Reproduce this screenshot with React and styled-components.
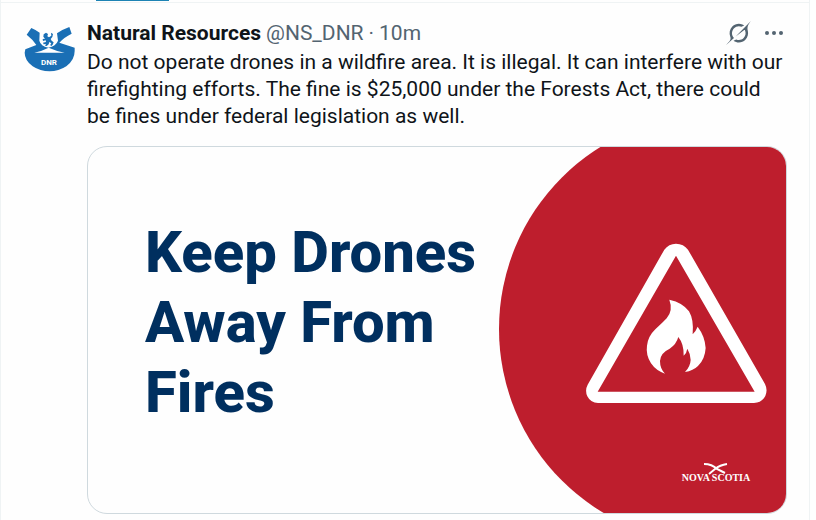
import styled, { createGlobalStyle } from "styled-components"

export default function App() {
    return (
        <>
            <GlobalStyle />
            <Coluna>
                <Abas>
                    <AbaAtiva />
                </Abas>
                <Post>
                    <LinkAvatar href="#perfil" aria-label="Natural Resources">
                        <Avatar />
                    </LinkAvatar>
                    <Conteudo>
                        <Cabecalho>
                            <Nome href="#perfil">Natural Resources</Nome>
                            <Info>@NS_DNR</Info>
                            <Info>·</Info>
                            <Info>10m</Info>
                            <Acoes>
                                <Botao type="button" aria-label="Grok">
                                    <IconeGrok />
                                </Botao>
                                <Botao type="button" aria-label="More">
                                    <IconeMais />
                                </Botao>
                            </Acoes>
                        </Cabecalho>
                        <Texto>
                            Do not operate drones in a wildfire area. It is illegal. It can interfere with our
                            firefighting efforts. The fine is $25,000 under the Forests Act, there could
                            be fines under federal legislation as well.
                        </Texto>
                        <Cartaz>
                            <Titulo>Keep Drones Away From Fires</Titulo>
                            <Arte />
                        </Cartaz>
                    </Conteudo>
                </Post>
            </Coluna>
        </>
    )
}

function Avatar() {
    return (
        <svg width="52" height="48" viewBox="69 75 156 144">
            <path
                d="M74 158 L76 148 L109 135 Q98 118 80 104 L94 84 Q108 90 119 98 L118 122 Q122 138 145 143 Q168 138 174 122 L171 100 Q188 88 208 81 L215 101 Q192 112 178 128 L224 143 L224 153 Q224 180 199 199 Q176 214 149 214 Q120 214 98 199 Q74 181 74 158 Z"
                fill="#1a6fb5"
            />
            <path d="M103 158 Q124 154 146 143 Q168 153 194 158 Z" fill="#fff" />
            <path
                d="M131 103 l7 -5 6 4 -2 7 5 3 7 -5 -1 -9 6 4 -2 9 -5 6 3 5 6 5 -3 7 -5 5 -2 -5 3 -4 -6 -4 -2 7 -6 5 -5 -1 3 -5 -7 1 -2 -5 9 -2 -1 -5 -8 2 -1 -6 7 -1 -5 -6 z"
                fill="#1a6fb5"
            />
            <text
                x="147"
                y="194"
                textAnchor="middle"
                fontFamily="Roboto, sans-serif"
                fontSize="24"
                fontWeight="700"
                fill="#fff"
            >
                DNR
            </text>
        </svg>
    )
}

function IconeGrok() {
    return (
        <svg width="25" height="24" viewBox="0 0 33 32" fill="#536471">
            <path d="M12.745 20.54l10.97-8.19c.539-.4 1.307-.244 1.564.38 1.349 3.288.746 7.241-1.938 9.955-2.683 2.714-6.417 3.31-9.83 1.954l-3.728 1.745c5.347 3.697 11.84 2.782 15.898-1.324 3.219-3.255 4.216-7.692 3.284-11.693l.008.009c-1.351-5.878.332-8.227 3.782-13.031L33 0l-4.54 4.59v-.014L12.743 20.544m-2.263 1.987c-3.837-3.707-3.175-9.446.1-12.755 2.42-2.449 6.388-3.448 9.852-1.979l3.72-1.737c-.67-.49-1.53-1.017-2.515-1.387-4.455-1.854-9.789-.931-13.41 2.728-3.483 3.523-4.579 8.94-2.697 13.561 1.405 3.454-.899 5.898-3.22 8.364C1.49 30.2.666 31.074 0 32l10.478-9.466" />
        </svg>
    )
}

function IconeMais() {
    return (
        <svg width="22" height="22" viewBox="0 0 22 22" fill="#536471">
            <circle cx="4" cy="11" r="2" />
            <circle cx="11" cy="11" r="2" />
            <circle cx="18" cy="11" r="2" />
        </svg>
    )
}

function Arte() {
    return (
        <Desenho viewBox="0 0 288 366" preserveAspectRatio="xMaxYMid slice">
            <circle cx="215" cy="182" r="214" fill="#be1e2d" />
            <g transform="translate(72 83) scale(0.3333)">
                <path
                    d="M283 59 Q296 41 318 41 Q341 41 354 59 L585 462 Q594 480 586 498 Q575 519 552 519 L84 519 Q62 519 52 499 Q44 481 53 464 Z M318 77 L83 485 L554 485 Z"
                    fill="#fff"
                    fillRule="evenodd"
                />
                <path
                    d="M298 209 Q339 218 357 244 Q372 269 368 313 Q378 303 383 290 Q405 319 407 354 Q405 388 384 408 Q370 422 345 426 Q361 410 362 390 Q362 372 352 356 Q350 370 341 377 Q342 342 325 321 Q319 343 299 356 Q271 369 270 393 Q270 416 285 431 Q258 422 243 400 Q227 374 231 347 Q234 319 256 298 Q277 279 290 265 Q310 241 298 209 Z"
                    fill="#fff"
                />
            </g>
            <g fill="none" stroke="#fff" strokeWidth="2">
                <path d="M206 317 Q214 317 219 322 L227 326" />
                <path d="M229 317 Q222 318 217 322 L211 327" />
            </g>
            <text
                x="218"
                y="334"
                textAnchor="middle"
                fontFamily="Liberation Serif, serif"
                fontSize="10"
                fontWeight="700"
                fill="#fff"
            >
                NOVA SCOTIA
            </text>
        </Desenho>
    )
}

const GlobalStyle = createGlobalStyle`
    * {
        box-sizing: border-box;
    }
    body {
        margin: 0;
        background: #fefefe;
        color: #0f1419;
        font-family: Roboto, sans-serif;
        font-size: 21px;
        line-height: 27px;
    }
`

const Coluna = styled.main`
    margin-right: 6px;
    border-left: 1px solid #eff3f4;
    border-right: 1px solid #eff3f4;
`

const Abas = styled.div`
    height: 3px;
    padding-left: 95px;
    border-bottom: 1px solid #eff3f4;
`

const AbaAtiva = styled.div`
    width: 73px;
    height: 1px;
    background: #1d83b4;
`

const Post = styled.article`
    display: flex;
    gap: 12px;
    padding: 14px 22px 6px;
`

const LinkAvatar = styled.a`
    flex: none;
    width: 52px;
    padding-top: 8px;

    svg {
        display: block;
    }
`

const Conteudo = styled.div`
    flex: 1;
    min-width: 0;
`

const Cabecalho = styled.header`
    display: flex;
    align-items: center;
    gap: 5px;
    height: 32px;
`

const Nome = styled.a`
    color: #0f1419;
    font-weight: 700;
    text-decoration: none;
`

const Info = styled.span`
    color: #536471;
`

const Acoes = styled.div`
    display: flex;
    align-items: center;
    gap: 12px;
    margin-left: auto;
    padding-right: 2px;
`

const Botao = styled.button`
    display: flex;
    padding: 0;
    border: 0;
    background: none;
    cursor: pointer;
`

const Texto = styled.p`
    margin: 0;
`

const Cartaz = styled.section`
    display: flex;
    align-items: center;
    justify-content: space-between;
    aspect-ratio: 700 / 368;
    margin-top: 16px;
    border: 1px solid #cfd9de;
    border-radius: 20px;
    background: #fefefe;
    overflow: hidden;
`

const Titulo = styled.h1`
    flex: 1;
    margin: 0;
    padding-left: 57px;
    padding-bottom: 16px;
    color: #002f5f;
    font-family: Roboto, sans-serif;
    font-size: 58px;
    font-weight: 800;
    line-height: 70px;
`

const Desenho = styled.svg`
    flex: none;
    height: 100%;
    aspect-ratio: 288 / 366;
`
